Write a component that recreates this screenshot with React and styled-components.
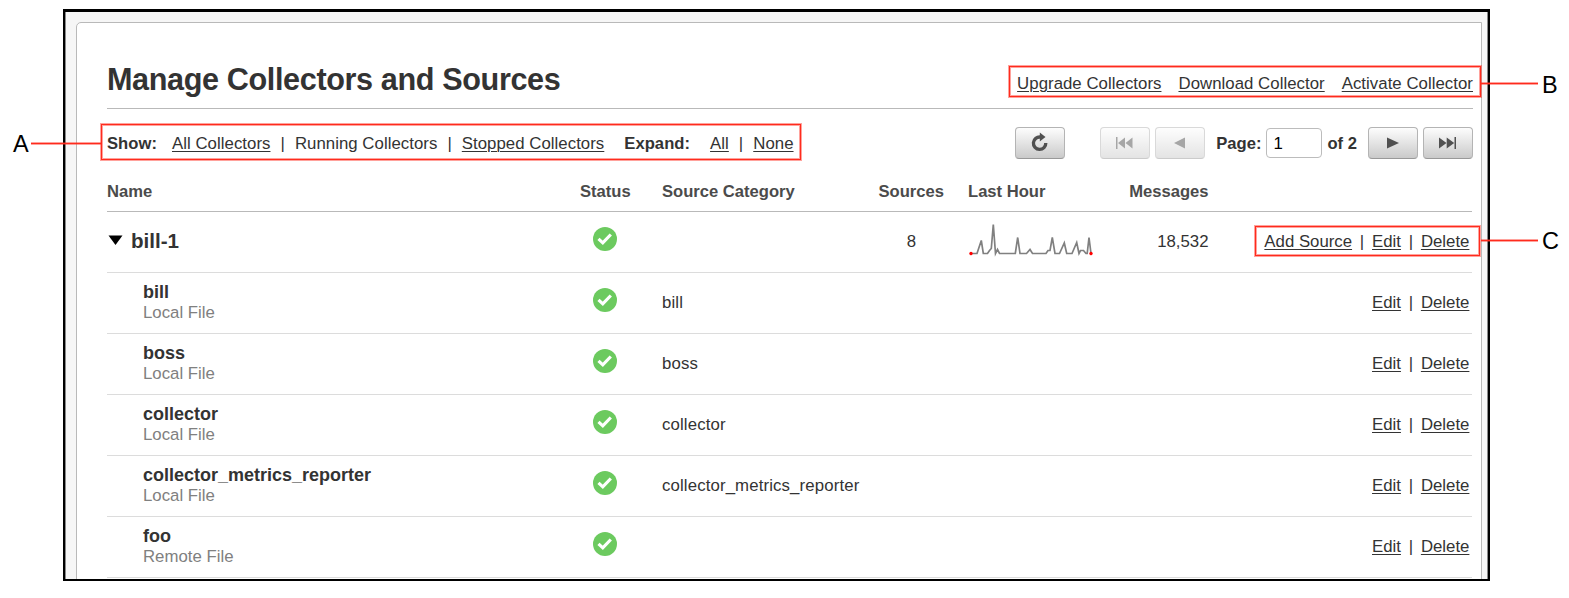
import React from "react";
import styled, { createGlobalStyle } from "styled-components";

const Global = createGlobalStyle`
  * { box-sizing: border-box; }
  body { margin: 0; background: #fff; font-family: "Liberation Sans", Arial, sans-serif; font-size: 16.8px; color: #333; overflow: hidden; }
  b { font-size: 16.6px; }
`;

const Page = styled.div`
  position: relative;
  width: 1569px;
  height: 598px;
  padding: 9px 0 0 63px;
  background: #fff;
`;

const Frame = styled.div`
  width: 1427px;
  height: 572px;
  border: 3px solid #000;
  border-left-width: 2px;
  border-right-width: 2px;
  border-bottom-width: 2px;
  background: #f6f6f6;
  box-shadow: inset 1px 0 #8a8a8a, inset -1px 0 #8a8a8a;
  overflow: hidden;
  padding: 10px 0 0 11px;
`;

const Panel = styled.main`
  width: 1406px;
  height: 570px;
  border: 1px solid #b9b9b9;
  border-radius: 5px 0 0 0;
  background: #fff;
  padding: 30px 8px 0 30px;
`;

const Header = styled.header`
  display: flex;
  justify-content: space-between;
  height: 56px;
  border-bottom: 1px solid #b9b9b9;
`;

const Title = styled.h1`
  margin: 7px 0 0;
  font-size: 30.6px;
  letter-spacing: -0.37px;
  line-height: 38px;
  white-space: nowrap;
`;

const Actions = styled.nav`
  display: flex;
  gap: 17px;
  padding-top: 21px;
  line-height: 20px;
  letter-spacing: 0.04px;
`;

const Link = styled.a`
  color: #333;
  text-decoration: underline;
  text-decoration-thickness: 1px;
  text-underline-offset: 2px;
  white-space: nowrap;
`;

const Toolbar = styled.div`
  display: flex;
  justify-content: space-between;
  align-items: center;
  height: 68px;
`;

const Filters = styled.div`
  display: flex;
  align-items: baseline;
  padding-top: 2px;
  white-space: nowrap;
  letter-spacing: 0.04px;
  b { margin-right: 15px; }
`;

const Sep = styled.span`
  margin: 0 ${(p) => p.$gap || 10}px;
`;

const Expand = styled.div`
  display: flex;
  align-items: baseline;
  margin-left: 20px;
  b { margin-right: 20px; }
`;

const Pager = styled.div`
  display: flex;
  align-items: center;
  font-size: 16.6px;
  font-weight: bold;
`;

const PagerText = styled.span`
  padding-top: 1px;
  margin-right: ${(p) => p.$after || 0}px;
`;

const Button = styled.button`
  display: grid;
  place-items: center;
  width: 50px;
  height: 32px;
  padding: 0;
  margin-right: ${(p) => p.$after || 0}px;
  border: 1px solid #b4b4b4;
  border-bottom-color: #999;
  border-radius: 4px;
  background: linear-gradient(#fdfdfd, #cacaca);
  color: #505050;
  opacity: ${(p) => (p.disabled ? 0.5 : 1)};
  svg { overflow: visible; }
`;

const PageInput = styled.input`
  width: 56px;
  height: 30px;
  margin: 0 5px 0 5px;
  padding: 1px 6px 0;
  border: 1px solid #bcbcbc;
  border-radius: 4px;
  font: 16.8px "Liberation Sans", Arial, sans-serif;
  color: #000;
`;

const Row = styled.div`
  display: grid;
  grid-template-columns: 473px 82px 206px 86px 126px 128.5px 1fr;
  height: ${(p) => (p.$head ? 35 : 61)}px;
  margin-right: 1px;
  line-height: 20px;
  border-bottom: 1px solid ${(p) => (p.$head ? "#b9b9b9" : "#dcdcdc")};
  font-size: ${(p) => (p.$head ? 16.6 : 16.8)}px;
  font-weight: ${(p) => (p.$head ? "bold" : "normal")};
  color: ${(p) => (p.$head ? "#4b4b4b" : "#333")};
`;

const Cell = styled.div`
  padding-top: 20px;
  padding-right: ${(p) => p.$right || 0}px;
  text-align: ${(p) => p.$align || "left"};
  white-space: nowrap;
`;

const CategoryCell = styled(Cell)`
  letter-spacing: 0.13px;
`;

const HeadCell = styled(Cell)`
  padding-top: 5px;
  padding-left: ${(p) => p.$left || 0}px;
`;

const StatusCell = styled(Cell)`
  padding: 15px 0 0 13px;
`;

const ChartCell = styled(Cell)`
  padding: 9px 0 0 14px;
`;

const CollectorName = styled.div`
  display: flex;
  align-items: flex-start;
  gap: 8px;
  padding: 19px 0 0 1px;
  font-size: 20.6px;
  font-weight: bold;
`;

const SourceName = styled.div`
  padding: 9px 0 0 36px;
  b { display: block; font-size: 18px; }
  span { display: block; padding-top: 1px; color: #808080; }
`;

const RED = "#ff2b1d";
const RED_SOFT = "#ff2b1d70";

const Callout = styled.div`
  position: absolute;
  left: ${(p) => p.$x}px;
  top: ${(p) => p.$y}px;
  width: ${(p) => p.$w}px;
  height: ${(p) => p.$h}px;
  border: 1px solid ${RED};
  box-shadow: 0 0 0 1px ${RED_SOFT}, inset 0 0 0 1px ${RED_SOFT};
`;

const Leader = styled.div`
  position: absolute;
  left: ${(p) => p.$x}px;
  top: ${(p) => p.$y}px;
  width: ${(p) => p.$w}px;
  height: 1px;
  background: ${RED};
  box-shadow: 0 -1px ${RED_SOFT}, 0 1px ${RED_SOFT};
`;

const Letter = styled.div`
  position: absolute;
  left: ${(p) => p.$x}px;
  top: ${(p) => p.$y}px;
  font-size: 23.5px;
  line-height: 28px;
  color: #000;
`;

const Block = styled.svg`
  display: block;
`;

const Check = () => (
  <Block width="25" height="25" viewBox="0 0 25 25">
    <circle cx="12" cy="12" r="12" fill="#6cca5f" />
    <path d="M5.500 11.800 L9.800 15.800 L17.800 7.500" fill="none" stroke="#fff" strokeWidth="3.200" />
  </Block>
);

const Spark = () => (
  <Block width="130" height="36" viewBox="0 0 130 36">
    <path
      d="M3 32.500 H9 L13.300 19.500 L15.300 32.500 H19.500 L21.500 29.500 L23.300 27.500 L25.300 3.500 L27.500 32.500 L29.500 28.500 L31.500 32.500 H47.300 L49.700 16.500 L52 32.500 H58.500 L62 28.500 L64.500 32.500 H78 L80 29.500 H82 L84.300 16.500 L87 32.500 H91.500 L96.300 22 L98.700 32.500 H104 L108.700 21.500 L111 32.500 L112.500 29.500 H115.500 L118 32.500 H119.200 L121 16.500 L123 32.500"
      fill="none" stroke="#808080" strokeWidth="1.700"
    />
    <circle cx="3" cy="32.500" r="1.700" fill="#f00" />
    <circle cx="123" cy="32.500" r="1.700" fill="#f00" />
  </Block>
);

const Icon = ({ d }) => (
  <svg width="20" height="20" viewBox="0 0 20 20"><path d={d} fill="currentColor" /></svg>
);

const sources = [
  ["bill", "Local File", "bill"],
  ["boss", "Local File", "boss"],
  ["collector", "Local File", "collector"],
  ["collector_metrics_reporter", "Local File", "collector_metrics_reporter"],
  ["foo", "Remote File", ""],
];

export default function App() {
  return (
    <>
      <Global />
      <Page>
        <Frame>
          <Panel>
            <Header>
              <Title>Manage Collectors and Sources</Title>
              <Actions>
                <Link>Upgrade Collectors</Link>
                <Link>Download Collector</Link>
                <Link>Activate Collector</Link>
              </Actions>
            </Header>
            <Toolbar>
              <Filters>
                <b>Show:</b>
                <Link>All Collectors</Link><Sep>|</Sep><span>Running Collectors</span><Sep>|</Sep><Link>Stopped Collectors</Link>
                <Expand><b>Expand:</b><Link>All</Link><Sep>|</Sep><Link>None</Link></Expand>
              </Filters>
              <Pager>
                <Button $after={35}>
                  <svg width="20" height="20" viewBox="0 0 20 20">
                    <path d="M10.500 4.100 A6.200 6.200 0 1 0 15.800 10" fill="none" stroke="currentColor" strokeWidth="3.300" />
                    <path d="M9.800 -0.500 L15.500 4 L9.800 8.500 Z" fill="currentColor" />
                  </svg>
                </Button>
                <Button disabled $after={5}><Icon d="M1 4h1.500v12h-1.500z M10 4.500v11l-7-5.500z M17.500 4.500v11l-7-5.500z" /></Button>
                <Button disabled $after={11}><Icon d="M15 4.500v11l-11-5.500z" /></Button>
                <PagerText>Page:</PagerText>
                <PageInput defaultValue="1" />
                <PagerText $after={11}>of 2</PagerText>
                <Button $after={5}><Icon d="M4 4.500v11l12-5.500z" /></Button>
                <Button><Icon d="M1 4.500v11l7.500-5.500z M8.700 4.500v11l7.500-5.500z M16.500 4h1.500v12h-1.500z" /></Button>
              </Pager>
            </Toolbar>
            <Row $head>
              <HeadCell>Name</HeadCell>
              <HeadCell>Status</HeadCell>
              <HeadCell>Source Category</HeadCell>
              <HeadCell $align="right" $right={10}>Sources</HeadCell>
              <HeadCell $left={14}>Last Hour</HeadCell>
              <HeadCell $align="right">Messages</HeadCell>
            </Row>
            <Row>
              <CollectorName>
                <svg width="15" height="20" viewBox="0 0 15 20"><path d="M0.500 4.500h14l-7 9.500z" fill="#000" /></svg>
                bill-1
              </CollectorName>
              <StatusCell><Check /></StatusCell>
              <Cell />
              <Cell $align="right" $right={38}>8</Cell>
              <ChartCell><Spark /></ChartCell>
              <Cell $align="right">18,532</Cell>
              <Cell $align="right" $right={2.6}><Link>Add Source</Link><Sep $gap={7.8}>|</Sep><Link>Edit</Link><Sep $gap={7.8}>|</Sep><Link>Delete</Link></Cell>
            </Row>
            {sources.map(([name, type, category]) => (
              <Row key={name}>
                <SourceName><b>{name}</b><span>{type}</span></SourceName>
                <StatusCell><Check /></StatusCell>
                <CategoryCell>{category}</CategoryCell>
                <Cell /><Cell /><Cell />
                <Cell $align="right" $right={2.6}><Link>Edit</Link><Sep $gap={7.8}>|</Sep><Link>Delete</Link></Cell>
              </Row>
            ))}
          </Panel>
        </Frame>
        <Letter $x={13} $y={130}>A</Letter>
        <Leader $x={31} $y={143} $w={70} />
        <Callout $x={101} $y={124} $w={700} $h={36} />
        <Callout $x={1009} $y={66} $w={472} $h={31} />
        <Leader $x={1481} $y={83} $w={57} />
        <Letter $x={1542} $y={71}>B</Letter>
        <Callout $x={1255} $y={226} $w={225} $h={30} />
        <Leader $x={1481} $y={240} $w={57} />
        <Letter $x={1542} $y={227}>C</Letter>
      </Page>
    </>
  );
}
